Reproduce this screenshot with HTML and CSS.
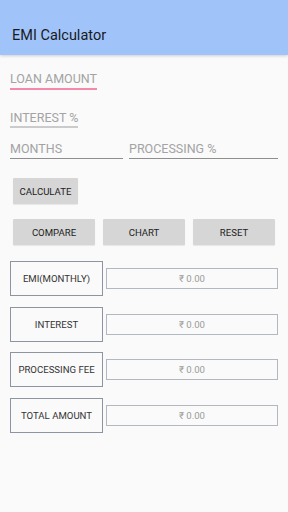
FILE: index.html
```html
<!DOCTYPE html>
<html lang="en">
<head>
  <meta charset="UTF-8" />
  <title>EMI Calculator</title>
  <link rel="stylesheet" href="styles.css">
</head>
<body>

<div class="appbar">EMI Calculator</div>

<div class="form">
  <div class="row row-loan">
    <div class="field field-focus">LOAN AMOUNT</div>
  </div>
  <div class="row row-interest">
    <div class="field field-light">INTEREST %</div>
  </div>
  <div class="row row-split">
    <div class="field field-dark months">MONTHS</div>
    <div class="field field-dark processing">PROCESSING %</div>
  </div>

  <div class="row row-calc">
    <button class="btn btn-calc">CALCULATE</button>
  </div>

  <div class="row row-actions">
    <button class="btn">COMPARE</button>
    <button class="btn">CHART</button>
    <button class="btn">RESET</button>
  </div>

  <div class="result">
    <div class="result-label">EMI(MONTHLY)</div>
    <div class="result-value">₹ 0.00</div>
  </div>
  <div class="result">
    <div class="result-label">INTEREST</div>
    <div class="result-value">₹ 0.00</div>
  </div>
  <div class="result">
    <div class="result-label">PROCESSING FEE</div>
    <div class="result-value">₹ 0.00</div>
  </div>
  <div class="result">
    <div class="result-label">TOTAL AMOUNT</div>
    <div class="result-value">₹ 0.00</div>
  </div>
</div>

</body>
</html>
```

FILE: styles.css
```css
body {
  margin: 0;
  background-color: #fafafa;
  font-family: Roboto, "Liberation Sans", sans-serif;
}

.appbar {
  height: 55px;
  padding: 28px 0 0 12px;
  box-sizing: border-box;
  background-color: #a0c4fa;
  color: #1a1a1a;
  font-size: 14.5px;
  line-height: 16px;
  box-shadow: 0 1px 3px rgba(0, 0, 0, 0.18);
}

.form {
  padding: 0 10px;
}

.row {
  display: flex;
}

.field {
  font-size: 12.5px;
  line-height: 15px;
  color: #a3a3a3;
  white-space: nowrap;
  box-sizing: border-box;
}

.field-focus {
  padding-bottom: 2px;
  border-bottom: 2px solid #f589aa;
}

.field-light {
  padding-bottom: 1px;
  border-bottom: 2px solid #cbcbcb;
}

.field-dark {
  padding-bottom: 2px;
  border-bottom: 1px solid #8e8e8e;
}

.row-loan {
  margin-top: 16px;
}

.row-interest {
  margin-top: 20px;
}

.row-split {
  margin-top: 13px;
  gap: 6px;
}

.months {
  width: 113px;
}

.processing {
  width: 149px;
}

.btn {
  height: 26px;
  padding: 0;
  border: none;
  border-radius: 1px;
  background-color: #d6d6d6;
  color: #222;
  font-family: Roboto, "Liberation Sans", sans-serif;
  font-size: 9.6px;
  box-shadow: 0 1px 1px rgba(0, 0, 0, 0.08);
}

.row-calc {
  margin-top: 19px;
  padding-left: 3px;
}

.btn-calc {
  width: 65px;
}

.row-actions {
  margin-top: 15px;
  padding-left: 3px;
  gap: 8px;
}

.row-actions .btn {
  width: 82px;
}

.result {
  display: flex;
  align-items: center;
  margin-top: 10.5px;
}

.row-actions + .result {
  margin-top: 16px;
}

.result-label {
  width: 93px;
  height: 35px;
  border: 1px solid #8d95a1;
  box-sizing: border-box;
  display: flex;
  align-items: center;
  justify-content: center;
  font-size: 9.6px;
  color: #333;
}

.result-value {
  width: 172px;
  height: 21px;
  margin-left: 3px;
  border: 1px solid #b3b8c0;
  box-sizing: border-box;
  display: flex;
  align-items: center;
  justify-content: center;
  font-size: 9.6px;
  color: #9a9a9a;
}
```
